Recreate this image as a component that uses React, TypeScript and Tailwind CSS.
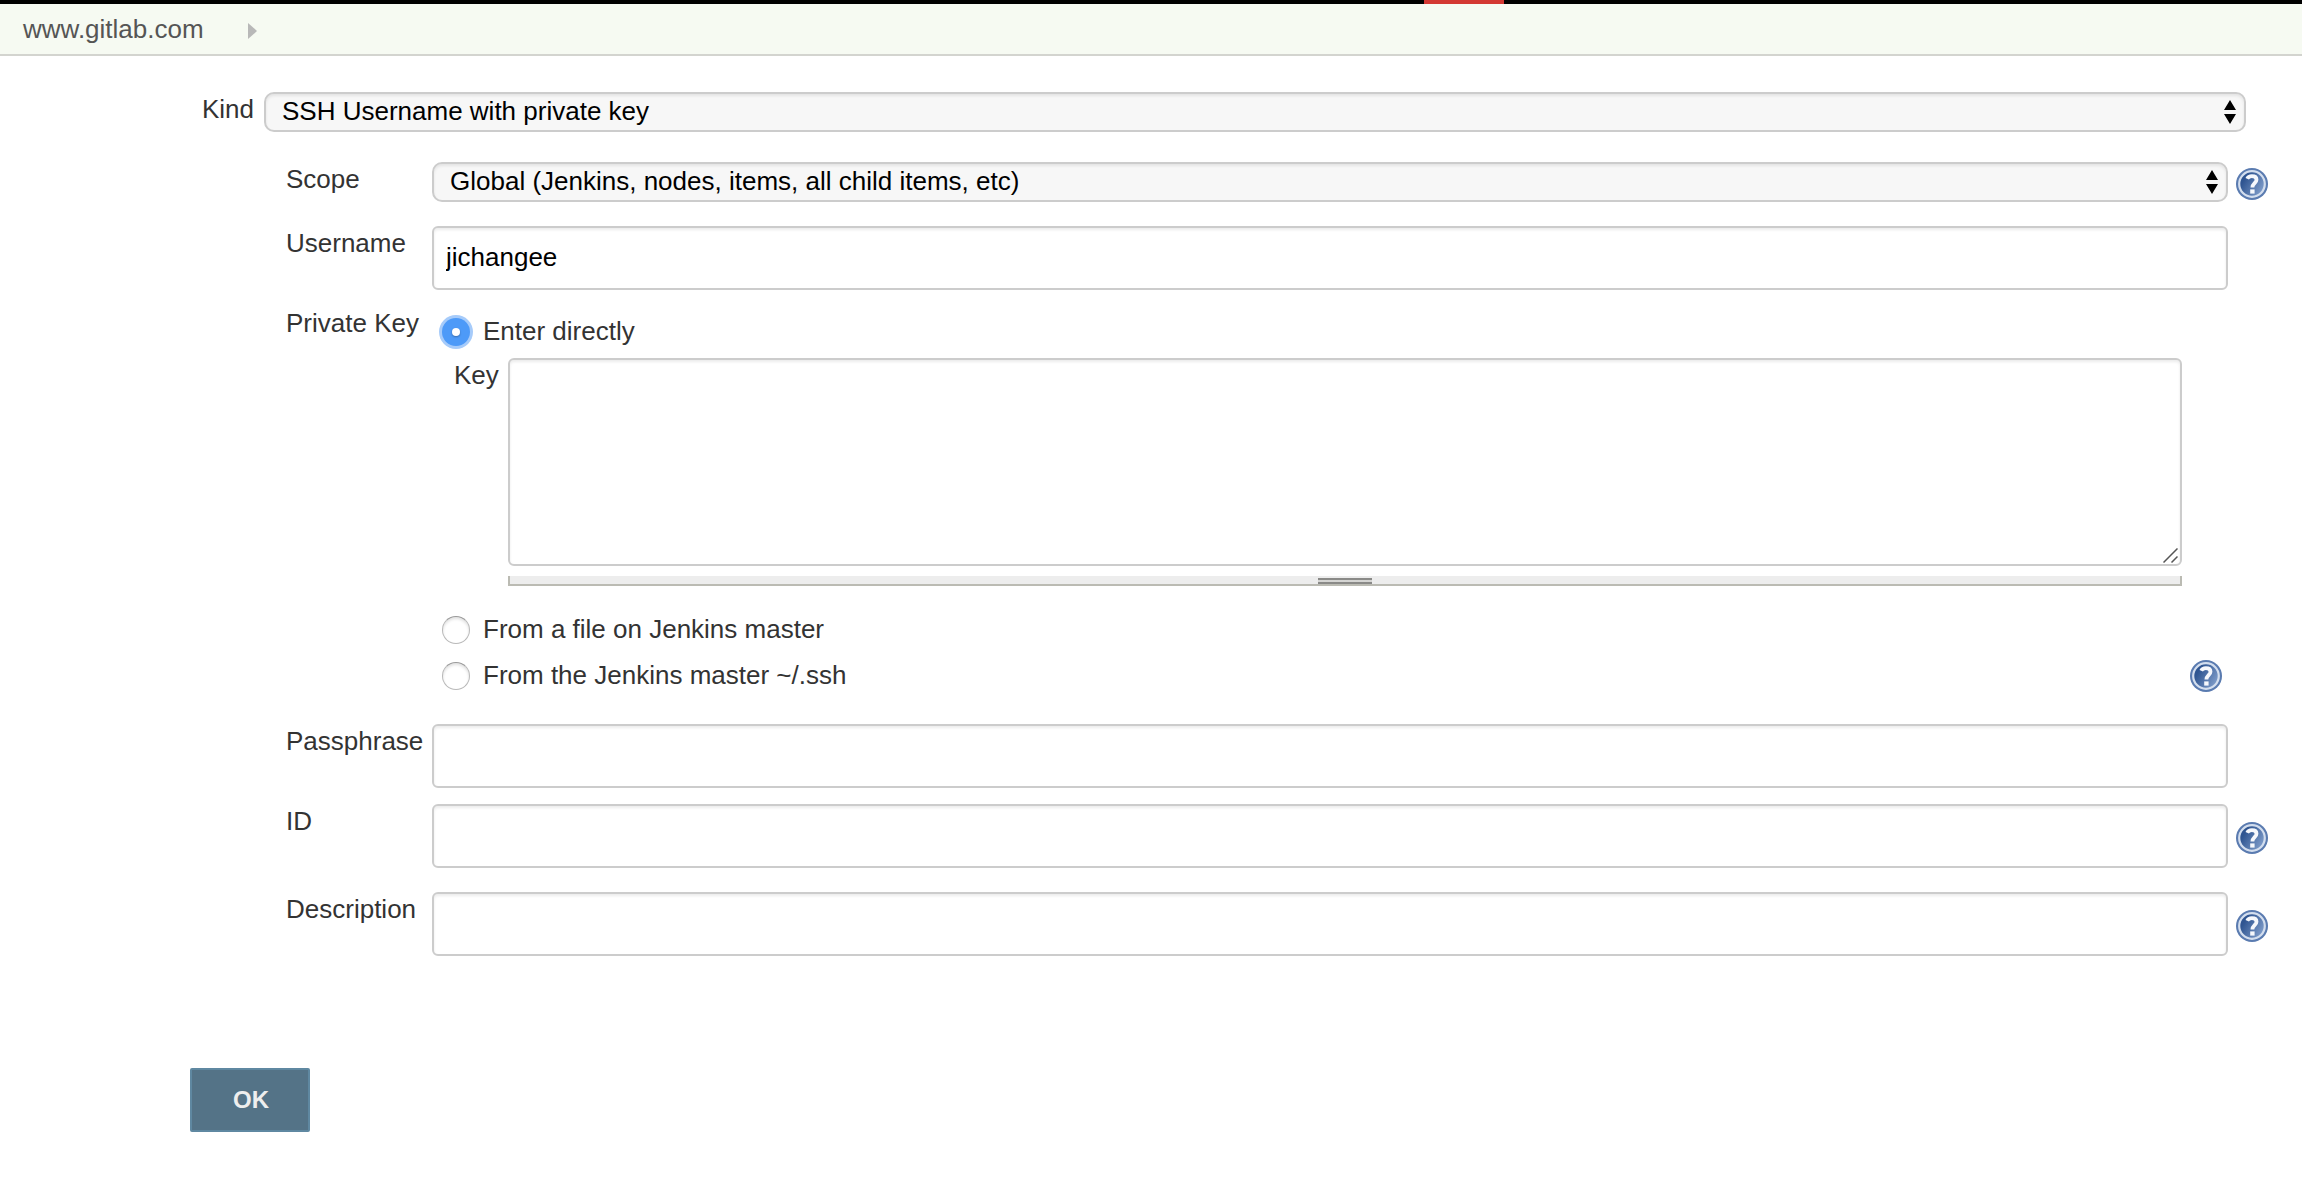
import type { ReactNode } from 'react';
import clsx from 'clsx';

function HelpIcon() {
  return (
    <svg viewBox="0 0 32 32" className="block size-8 shrink-0">
      <defs>
        <linearGradient id="help" x1="0" y1="0.2" x2="1" y2="0.8">
          <stop offset="0.2" stopColor="#2f5591" />
          <stop offset="1" stopColor="#86a3cf" />
        </linearGradient>
      </defs>
      <circle cx="16" cy="16" r="16" fill="#5a7bb0" />
      <circle cx="16" cy="16" r="12.8" fill="url(#help)" stroke="#d3deee" strokeWidth="2.2" />
      <path
        d="M11.2 10.8c.8-1.700 2.400-2.600 4.700-2.600 2.900 0 4.600 1.300 4.600 3.500 0 3.400-4.100 3.700-4.100 7.900"
        fill="none"
        stroke="#f6f8fc"
        strokeWidth="3.8"
      />
      <rect x="14.2" y="21.4" width="4.400" height="4.200" fill="#f6f8fc" />
    </svg>
  );
}

function Select({ value, className }: { value: string; className?: string }) {
  return (
    <button
      type="button"
      className={clsx(
        'flex h-10 items-center justify-between rounded-[10px] border-2 border-[#ccc] bg-[#f7f7f7] pr-2 pb-0.5 pl-4 text-black shadow-[inset_0_2px_3px_rgba(0,0,0,0.08)]',
        className,
      )}
    >
      <span>{value}</span>
      <svg viewBox="0 0 12 24" className="mt-0.5 h-6 w-3">
        <path d="M0 10 6 0l6 10zM0 14h12L6 24z" />
      </svg>
    </button>
  );
}

function TextInput({ value }: { value?: string }) {
  return (
    <input
      type="text"
      defaultValue={value}
      className="h-16 w-[1796px] rounded-md border-2 border-[#ccc] bg-white px-3 pb-0.5 text-black shadow-[inset_0_2px_3px_rgba(0,0,0,0.08)] outline-none"
    />
  );
}

type FieldProps = {
  label: string;
  className?: string;
  help?: boolean;
  children: ReactNode;
};

function Field({ label, className, help, children }: FieldProps) {
  return (
    <div className={clsx('flex items-start pl-[286px]', className)}>
      <div className="w-[146px] shrink-0 pt-0.5">{label}</div>
      <div className="flex items-center gap-2">
        {children}
        {help && (
          <div className="pt-1">
            <HelpIcon />
          </div>
        )}
      </div>
    </div>
  );
}

function Radio({ label, checked }: { label: string; checked?: boolean }) {
  return (
    <label className="flex h-[34px] items-center gap-[13px]">
      {checked ? (
        <span className="flex size-7 items-center justify-center rounded-full bg-[#4d9af8] shadow-[0_0_0_3px_#a6cbfa]">
          <span className="size-2 rounded-full bg-white shadow-[0_1px_2px_rgba(0,0,0,0.3)]" />
        </span>
      ) : (
        <span className="size-7 rounded-full border border-[#b9b9b9] border-t-[#999] bg-white shadow-[inset_0_2px_3px_rgba(0,0,0,0.12)]" />
      )}
      <span className="pb-0.5">{label}</span>
    </label>
  );
}

export default function App() {
  return (
    <div className="h-[1180px] w-[2302px] overflow-hidden bg-white font-['Liberation_Sans',Arial,sans-serif] text-[26px] leading-[30px] text-[#333]">
      <div className="h-1 bg-black pl-[1424px]">
        <div className="h-1 w-20 bg-[#d33833]" />
      </div>
      <header className="flex h-[52px] items-start border-b-2 border-[#d3d4cf] bg-[#f6faf2] pt-2.5 pl-[23px]">
        <span className="w-[225px] text-[#555]">www.gitlab.com</span>
        <svg viewBox="0 0 9 16" className="mt-[9px] h-4 w-[9px]">
          <path d="M0 0l9 8-9 8z" fill="#b8b8b8" />
        </svg>
      </header>

      <form>
        <div className="mt-9 flex items-start pl-[202px]">
          <div className="w-[62px] pt-0.5">Kind</div>
          <Select value="SSH Username with private key" className="w-[1982px]" />
        </div>

        <Field label="Scope" className="mt-[30px]" help>
          <Select value="Global (Jenkins, nodes, items, all child items, etc)" className="w-[1796px]" />
        </Field>
        <Field label="Username" className="mt-6">
          <TextInput value="jichangee" />
        </Field>

        <div className="mt-4 flex items-start pl-[286px]">
          <div className="w-[156px] shrink-0 pt-0.5">Private Key</div>
          <div className="w-[1780px] pt-[9px]">
            <Radio label="Enter directly" checked />
            <div className="mt-[9px] flex items-start pl-3">
              <div className="w-[54px] pt-0.5">Key</div>
              <div>
                <div className="flex h-[208px] w-[1674px] items-end justify-end rounded-md border-2 border-[#ccc] bg-white pr-0.5 pb-px shadow-[inset_0_2px_3px_rgba(0,0,0,0.08)]">
                  <svg viewBox="0 0 15 15" className="size-[15px]" fill="none" stroke="#555" strokeWidth="1.5">
                    <path d="M.5 14.5 14.5.5M8.500 14.500l6-6" />
                  </svg>
                </div>
                <div className="mt-2.5 flex h-2.5 justify-center border-2 border-t-0 border-[#bbbbb3] bg-[#ededed] pt-0.5">
                  <div className="h-1.5 w-[54px] border-y-2 border-[#8a8a88] bg-[#d5d5d3]" />
                </div>
              </div>
            </div>
            <div className="mt-[27px]">
              <Radio label="From a file on Jenkins master" />
            </div>
            <div className="mt-3 flex items-center justify-between">
              <Radio label="From the Jenkins master ~/.ssh" />
              <HelpIcon />
            </div>
          </div>
        </div>

        <Field label="Passphrase" className="mt-[31px]">
          <TextInput />
        </Field>
        <Field label="ID" className="mt-4" help>
          <TextInput />
        </Field>
        <Field label="Description" className="mt-6" help>
          <TextInput />
        </Field>

        <button
          type="button"
          className="mt-28 ml-[190px] block h-16 w-[120px] rounded-[2px] border-2 border-[#5f88a1] bg-[#547387] pl-0.5 text-2xl font-bold text-[#eee]"
        >
          OK
        </button>
      </form>
    </div>
  );
}
